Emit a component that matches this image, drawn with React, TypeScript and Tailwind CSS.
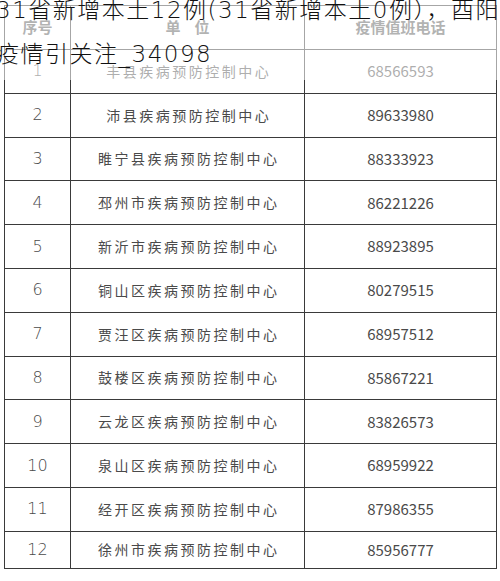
const rows = [
  { no: "1", unit: "丰县疾病预防控制中心", tel: "68566593" },
  { no: "2", unit: "沛县疾病预防控制中心", tel: "89633980" },
  { no: "3", unit: "睢宁县疾病预防控制中心", tel: "88333923" },
  { no: "4", unit: "邳州市疾病预防控制中心", tel: "86221226" },
  { no: "5", unit: "新沂市疾病预防控制中心", tel: "88923895" },
  { no: "6", unit: "铜山区疾病预防控制中心", tel: "80279515" },
  { no: "7", unit: "贾汪区疾病预防控制中心", tel: "68957512" },
  { no: "8", unit: "鼓楼区疾病预防控制中心", tel: "85867221" },
  { no: "9", unit: "云龙区疾病预防控制中心", tel: "83826573" },
  { no: "10", unit: "泉山区疾病预防控制中心", tel: "68959922" },
  { no: "11", unit: "经开区疾病预防控制中心", tel: "87986355" },
  { no: "12", unit: "徐州市疾病预防控制中心", tel: "85956777" },
];

const App = () => {
  return (
    <div className="relative w-[500px] h-[581px] overflow-hidden bg-white font-['Noto_Sans_CJK_SC','Noto_Sans',sans-serif]">
      {/* table */}
      <div className="pt-[5px] pl-[4px]">
        <table className="w-[492px] border-collapse table-fixed text-[#4a4a4a]">
          <colgroup>
            <col className="w-[66px]" />
            <col className="w-[234px]" />
            <col className="w-[192px]" />
          </colgroup>
          <thead>
            <tr className="h-[44px]">
              <th className="border border-[#3a3a3a] text-[15px] font-bold text-[#555]">序号</th>
              <th className="border border-[#3a3a3a] text-[15px] font-bold text-[#555] tracking-[14px] pl-[14px]">单位</th>
              <th className="border border-[#3a3a3a] text-[15px] font-bold text-[#555]">疫情值班电话</th>
            </tr>
          </thead>
          <tbody>
            {rows.map((r, i) => (
              <tr key={r.no} className={i === rows.length - 1 ? "h-[37px]" : "h-[43.8px]"}>
                <td className="border border-[#3a3a3a] text-center text-[16px] font-['DejaVu_Sans',sans-serif] font-light">
                  {r.no}
                </td>
                <td className="border border-[#3a3a3a] text-center text-[14px] tracking-[2.5px] pl-[2.5px]">
                  {r.unit}
                </td>
                <td className="border border-[#3a3a3a] text-center text-[15px]">{r.tel}</td>
              </tr>
            ))}
          </tbody>
        </table>
      </div>

      {/* title overlay */}
      <div className="absolute top-[-12px] left-[-4px] w-[530px] h-[92px] bg-white/55 text-[23px] tracking-[1.5px] leading-[44px] text-[#111] font-light whitespace-nowrap font-['DejaVu_Sans','Noto_Sans_CJK_SC',sans-serif]">
        <div>31省新增本土12例(31省新增本土0例），酉阳</div>
        <div>疫情引关注_34098</div>
      </div>
    </div>
  );
};

export default App;
